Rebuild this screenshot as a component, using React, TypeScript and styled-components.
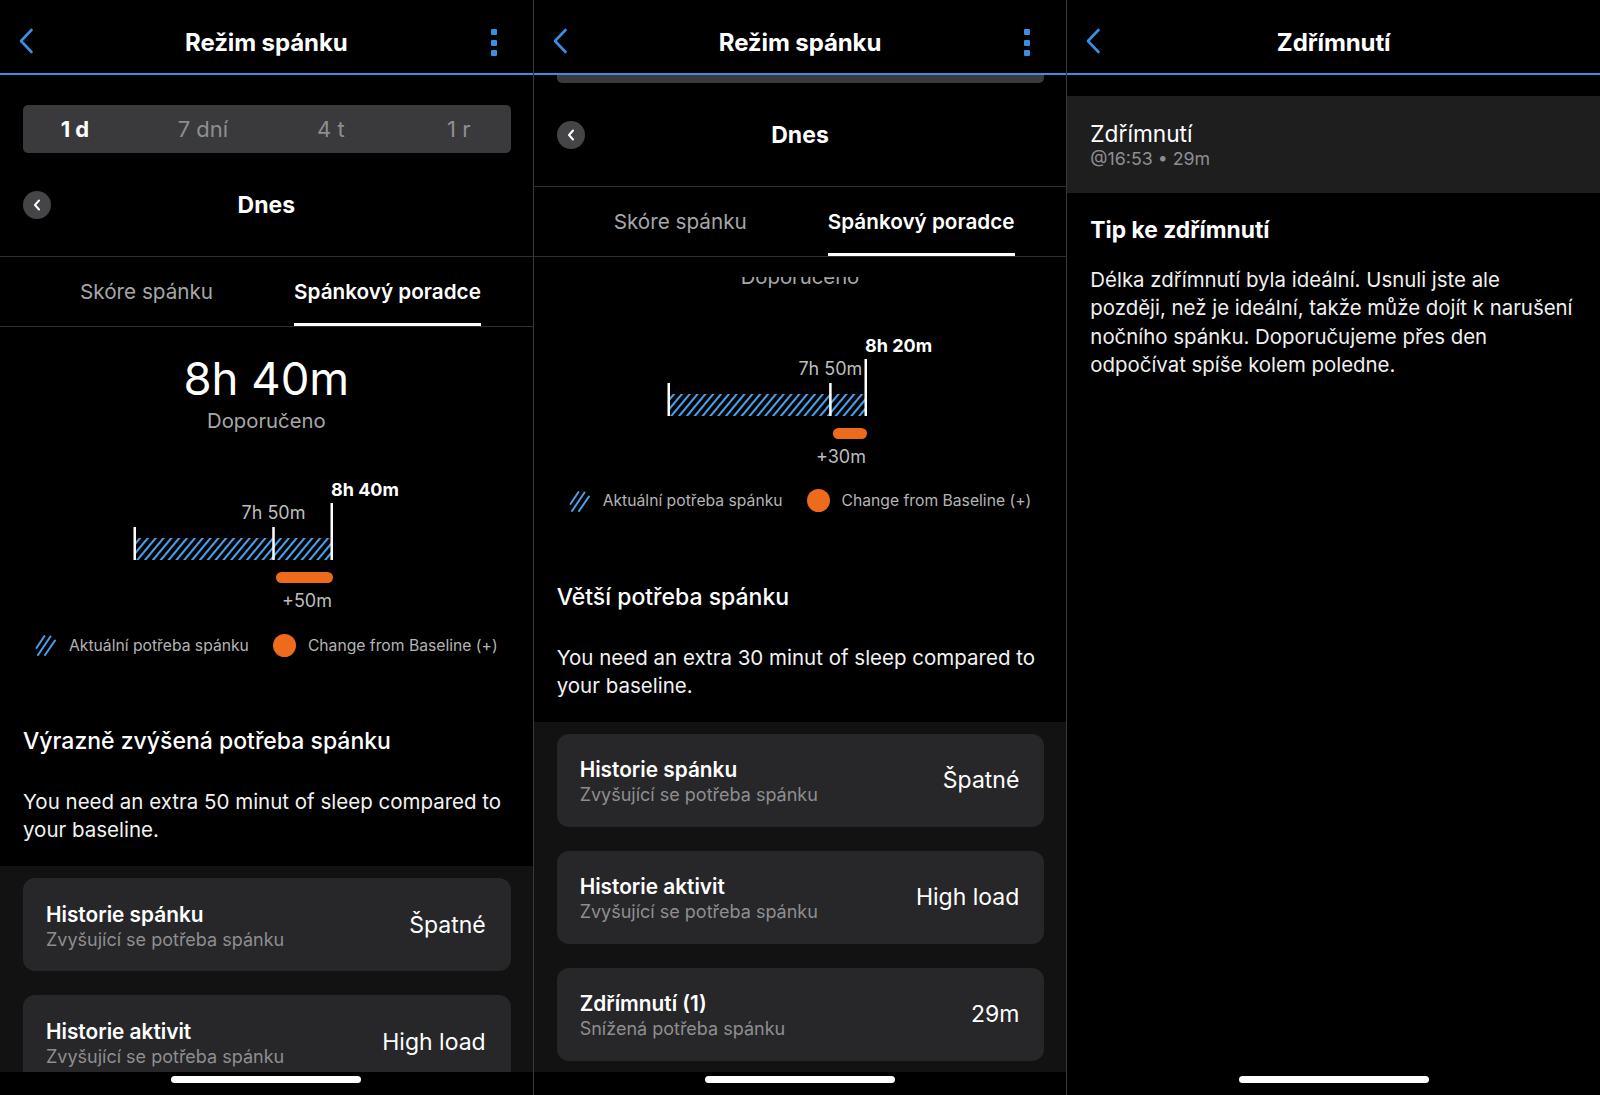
import React from 'react';
import styled, { createGlobalStyle } from 'styled-components';

const BLUE = '#3a8fe3';
const ORANGE = '#ee6b1b';

const GlobalStyle = createGlobalStyle`
  html, body { margin: 0; padding: 0; background: #000; }
  body {
    font-family: Inter, "Noto Sans", "Liberation Sans", sans-serif;
    color: #fff;
    -webkit-font-smoothing: antialiased;
  }
  * { box-sizing: border-box; }
`;

const Screen = styled.div`
  display: flex;
  width: 1600px;
  height: 1095px;
  background: #000;
  overflow: hidden;
`;

const Panel = styled.section`
  flex: 1 1 0;
  min-width: 0;
  height: 100%;
  display: flex;
  flex-direction: column;
`;

const PanelDivider = styled.div`
  flex: none;
  width: 1px;
  background: #383838;
`;

const Header = styled.header`
  flex: none;
  height: 75px;
  padding-top: 12px;
  display: grid;
  grid-template-columns: 70px 1fr 70px;
  align-items: center;
  border-bottom: 2px solid ${BLUE};
`;

const BackButton = styled.div`
  justify-self: start;
  margin-left: 18px;
  margin-bottom: 4px;
  display: flex;
`;

const HeaderTitle = styled.h1`
  margin: 0;
  text-align: center;
  font-size: 24px;
  line-height: 30px;
  font-weight: 700;
  letter-spacing: -0.1px;
`;

const MoreDots = styled.div`
  justify-self: end;
  margin-right: 36px;
  display: flex;
  flex-direction: column;
  gap: 4.5px;
`;

const Dot = styled.span`
  width: 6px;
  height: 6px;
  border-radius: 1px;
  background: ${BLUE};
`;

const Body = styled.div`
  flex: 1;
  min-height: 0;
  display: flex;
  flex-direction: column;
  overflow: hidden;
`;

const Segment = styled.div`
  flex: none;
  margin: 30px 22px 0 23px;
  height: 48px;
  border-radius: 5px;
  background: #3a3a3c;
`;

const SegmentTrack = styled.div`
  margin: 0 -12px;
  height: 100%;
  display: grid;
  grid-template-columns: repeat(4, 1fr);
  align-items: center;
`;

const SegmentLabel = styled.span<{ $active?: boolean }>`
  text-align: center;
  font-size: 22px;
  line-height: 48px;
  font-weight: ${(p) => (p.$active ? 700 : 400)};
  color: ${(p) => (p.$active ? '#fff' : '#8e8e92')};
`;

const SegmentPeek = styled.div`
  flex: none;
  height: 8px;
  margin: 0 22px 0 23px;
  border-radius: 0 0 5px 5px;
  background: #3a3a3c;
`;

const DayRow = styled.div`
  flex: none;
  height: 104px;
  display: grid;
  grid-template-columns: 70px 1fr 70px;
  align-items: center;
  border-bottom: 1px solid #2e2e30;
`;

const RoundButton = styled.div`
  margin-left: 23px;
  width: 28px;
  height: 28px;
  border-radius: 50%;
  background: #454547;
  display: flex;
  align-items: center;
  justify-content: center;
`;

const DayTitle = styled.div`
  text-align: center;
  font-size: 23px;
  line-height: 28px;
  font-weight: 700;
`;

const Tabs = styled.nav`
  flex: none;
  height: 70px;
  display: flex;
  padding-left: 80px;
  gap: 81px;
  border-bottom: 1px solid #2e2e30;
`;

const Tab = styled.div<{ $active?: boolean }>`
  height: 69px;
  padding-top: 23px;
  font-size: 20.7px;
  line-height: 24px;
  font-weight: ${(p) => (p.$active ? 600 : 400)};
  color: ${(p) => (p.$active ? '#fff' : '#a6a6a8')};
  border-bottom: 3px solid ${(p) => (p.$active ? '#fff' : 'transparent')};
  white-space: nowrap;
`;

const Viewport = styled.div<{ $top: number }>`
  flex: 1;
  min-height: 0;
  margin-top: ${(p) => p.$top}px;
  overflow: hidden;
  display: flex;
  flex-direction: column;
`;

const Content = styled.div<{ $scroll: number }>`
  flex: 1 0 auto;
  margin-top: ${(p) => -p.$scroll}px;
  display: flex;
  flex-direction: column;
`;

const BigValue = styled.div`
  margin-top: 11px;
  text-align: center;
  font-size: 45.5px;
  line-height: 52px;
  font-weight: 400;
`;

const Recommended = styled.div`
  margin-top: 3px;
  text-align: center;
  font-size: 20.3px;
  line-height: 26px;
  color: #a8a8a8;
`;

const ChartSvg = styled.svg`
  flex: none;
  display: block;
  align-self: center;
  margin-top: 36px;
`;

const ChartLabel = styled.text<{ $bold?: boolean }>`
  font-family: Inter, "Noto Sans", sans-serif;
  font-size: 18px;
  font-weight: ${(p) => (p.$bold ? 700 : 400)};
  fill: ${(p) => (p.$bold ? '#fff' : '#bdbdbd')};
`;

const Legend = styled.div`
  flex: none;
  margin-top: 13px;
  height: 24px;
  display: flex;
  justify-content: center;
  align-items: center;
  gap: 24px;
`;

const LegendItem = styled.div`
  display: flex;
  align-items: center;
  gap: 12px;
  font-size: 15.7px;
  color: #b4b4b4;
  white-space: nowrap;
`;

const OrangeDot = styled.span`
  width: 23px;
  height: 23px;
  border-radius: 50%;
  background: ${ORANGE};
`;

const SectionHeading = styled.h2`
  margin: 70px 0 0;
  padding: 0 23px;
  font-size: 23px;
  line-height: 28px;
  font-weight: 500;
  white-space: nowrap;
`;

const Paragraph = styled.p`
  margin: 33px 0 0;
  padding: 0 23px;
  font-size: 20.5px;
  line-height: 28px;
  color: #f2f2f2;
  white-space: nowrap;
`;

const CardSection = styled.div`
  flex: 1 0 auto;
  margin-top: 22px;
  padding: 12px 22px 11px 23px;
  background: #121212;
  display: flex;
  flex-direction: column;
  gap: 24px;
`;

const Card = styled.div`
  flex: none;
  height: 93px;
  border-radius: 12px;
  background: #272729;
  display: flex;
  align-items: center;
  justify-content: space-between;
  padding: 0 25px 0 23px;
`;

const CardText = styled.div`
  display: flex;
  flex-direction: column;
  padding-top: 5px;
`;

const CardTitle = styled.span`
  font-size: 20.8px;
  line-height: 24px;
  font-weight: 600;
`;

const CardSub = styled.span`
  margin-top: 1px;
  font-size: 18px;
  line-height: 24px;
  color: #8e8e90;
`;

const CardValue = styled.span`
  font-size: 23px;
  line-height: 28px;
`;

const HomeBar = styled.div`
  flex: none;
  height: 23px;
  padding-top: 4px;
  display: flex;
  justify-content: center;
  background: #000;
`;

const HomeIndicator = styled.span`
  width: 190px;
  height: 7px;
  border-radius: 4px;
  background: #fff;
`;

const NapBlock = styled.div`
  flex: none;
  margin-top: 21px;
  height: 97px;
  padding: 24px 23px 0;
  background: #1e1e1f;
  display: flex;
  flex-direction: column;
`;

const NapTitle = styled.span`
  font-size: 22.7px;
  line-height: 28px;
`;

const NapMeta = styled.span`
  font-size: 17.8px;
  line-height: 22px;
  color: #8e8e92;
`;

const TipHeading = styled.h2`
  margin: 23px 0 0;
  padding: 0 23px;
  font-size: 22.8px;
  line-height: 28px;
  font-weight: 700;
`;

const TipText = styled.p`
  margin: 22px 0 0;
  padding: 0 23px;
  font-size: 20.4px;
  line-height: 28.3px;
  color: #f0f0f0;
  white-space: nowrap;
`;

const BackChevron = () => (
  <svg width="16" height="26" viewBox="0 0 16 26">
    <path d="M13.5 2 L3 13 L13.5 24" fill="none" stroke={BLUE} strokeWidth="2.6" strokeLinecap="round" strokeLinejoin="round" />
  </svg>
);

const SmallChevron = () => (
  <svg width="8" height="12" viewBox="0 0 8 12">
    <path d="M6 1.5 L2 6 L6 10.5" fill="none" stroke="#fff" strokeWidth="2" strokeLinecap="round" strokeLinejoin="round" />
  </svg>
);

const HatchIcon = () => (
  <svg width="22" height="22" viewBox="0 0 22 22">
    <g stroke="#4a9fea" strokeWidth="2" strokeLinecap="round">
      <path d="M1.5 14 L9.5 2" />
      <path d="M3 21 L15.5 2.5" />
      <path d="M10 21 L20 6.5" />
    </g>
  </svg>
);

type ChartProps = { id: string; mid: number; total: string; base: string; delta: string };

const NeedChart = ({ id, mid, total, base, delta }: ChartProps) => (
  <ChartSvg width={533} height={150} viewBox="0 0 533 150">
    <defs>
      <pattern id={id} patternUnits="userSpaceOnUse" width="6" height="6" patternTransform="rotate(40)">
        <rect x="0" y="0" width="2.1" height="6" fill="#4a9fea" />
      </pattern>
    </defs>
    <rect x="135" y="68" width="196" height="22" fill={`url(#${id})`} />
    <rect x="133.5" y="57" width="2.5" height="33" fill="#fff" />
    <rect x={mid - 1.25} y="57" width="2.5" height="33" fill="#fff" />
    <rect x="330.5" y="33" width="2.5" height="57" fill="#fff" />
    <rect x={mid + 2.5} y="102" width={333 - mid - 2.5} height="11" rx="5.5" fill={ORANGE} />
    <ChartLabel x="331" y="26" $bold>{total}</ChartLabel>
    <ChartLabel x={mid} y="49" textAnchor="middle">{base}</ChartLabel>
    <ChartLabel x="332" y="137" textAnchor="end">{delta}</ChartLabel>
  </ChartSvg>
);

type Factor = { title: string; sub: string; value: string };

const SleepHeader = ({ title, more }: { title: string; more?: boolean }) => (
  <Header>
    <BackButton>
      <BackChevron />
    </BackButton>
    <HeaderTitle>{title}</HeaderTitle>
    {more ? (
      <MoreDots>
        <Dot />
        <Dot />
        <Dot />
      </MoreDots>
    ) : (
      <span />
    )}
  </Header>
);

type CoachProps = {
  id: string;
  collapsed?: boolean;
  clipTop: number;
  scroll: number;
  mid: number;
  total: string;
  delta: string;
  heading: string;
  text: string[];
  factors: Factor[];
};

const CoachPanel = ({ id, collapsed, clipTop, scroll, mid, total, delta, heading, text, factors }: CoachProps) => (
  <Panel>
    <SleepHeader title="Režim spánku" more />
    <Body>
      {collapsed ? (
        <SegmentPeek />
      ) : (
        <Segment>
          <SegmentTrack>
            <SegmentLabel $active>1 d</SegmentLabel>
            <SegmentLabel>7 dní</SegmentLabel>
            <SegmentLabel>4 t</SegmentLabel>
            <SegmentLabel>1 r</SegmentLabel>
          </SegmentTrack>
        </Segment>
      )}
      <DayRow>
        <RoundButton>
          <SmallChevron />
        </RoundButton>
        <DayTitle>Dnes</DayTitle>
        <span />
      </DayRow>
      <Tabs>
        <Tab>Skóre spánku</Tab>
        <Tab $active>Spánkový poradce</Tab>
      </Tabs>
      <Viewport $top={clipTop}>
        <Content $scroll={scroll}>
          <BigValue>{total}</BigValue>
          <Recommended>Doporučeno</Recommended>
          <NeedChart id={id} mid={mid} total={total} base="7h 50m" delta={delta} />
          <Legend>
            <LegendItem>
              <HatchIcon />
              Aktuální potřeba spánku
            </LegendItem>
            <LegendItem>
              <OrangeDot />
              Change from Baseline (+)
            </LegendItem>
          </Legend>
          <SectionHeading>{heading}</SectionHeading>
          <Paragraph>
            {text[0]}
            <br />
            {text[1]}
          </Paragraph>
          <CardSection>
            {factors.map((f) => (
              <Card key={f.title}>
                <CardText>
                  <CardTitle>{f.title}</CardTitle>
                  <CardSub>{f.sub}</CardSub>
                </CardText>
                <CardValue>{f.value}</CardValue>
              </Card>
            ))}
          </CardSection>
        </Content>
      </Viewport>
    </Body>
    <HomeBar>
      <HomeIndicator />
    </HomeBar>
  </Panel>
);

const baseFactors: Factor[] = [
  { title: 'Historie spánku', sub: 'Zvyšující se potřeba spánku', value: 'Špatné' },
  { title: 'Historie aktivit', sub: 'Zvyšující se potřeba spánku', value: 'High load' },
];

const NapPanel = () => (
  <Panel>
    <SleepHeader title="Zdřímnutí" />
    <Body>
      <NapBlock>
        <NapTitle>Zdřímnutí</NapTitle>
        <NapMeta>@16:53 • 29m</NapMeta>
      </NapBlock>
      <TipHeading>Tip ke zdřímnutí</TipHeading>
      <TipText>
        Délka zdřímnutí byla ideální. Usnuli jste ale
        <br />
        později, než je ideální, takže může dojít k narušení
        <br />
        nočního spánku. Doporučujeme přes den
        <br />
        odpočívat spíše kolem poledne.
      </TipText>
    </Body>
    <HomeBar>
      <HomeIndicator />
    </HomeBar>
  </Panel>
);

export default function App() {
  return (
    <>
      <GlobalStyle />
      <Screen>
        <CoachPanel
          id="hatch-a"
          clipTop={15}
          scroll={0}
          mid={273.5}
          total="8h 40m"
          delta="+50m"
          heading="Výrazně zvýšená potřeba spánku"
          text={['You need an extra 50 minut of sleep compared to', 'your baseline.']}
          factors={baseFactors}
        />
        <PanelDivider />
        <CoachPanel
          id="hatch-b"
          collapsed
          clipTop={20}
          scroll={79.5}
          mid={296.4}
          total="8h 20m"
          delta="+30m"
          heading="Větší potřeba spánku"
          text={['You need an extra 30 minut of sleep compared to', 'your baseline.']}
          factors={[
            ...baseFactors,
            { title: 'Zdřímnutí (1)', sub: 'Snížená potřeba spánku', value: '29m' },
          ]}
        />
        <PanelDivider />
        <NapPanel />
      </Screen>
    </>
  );
}
